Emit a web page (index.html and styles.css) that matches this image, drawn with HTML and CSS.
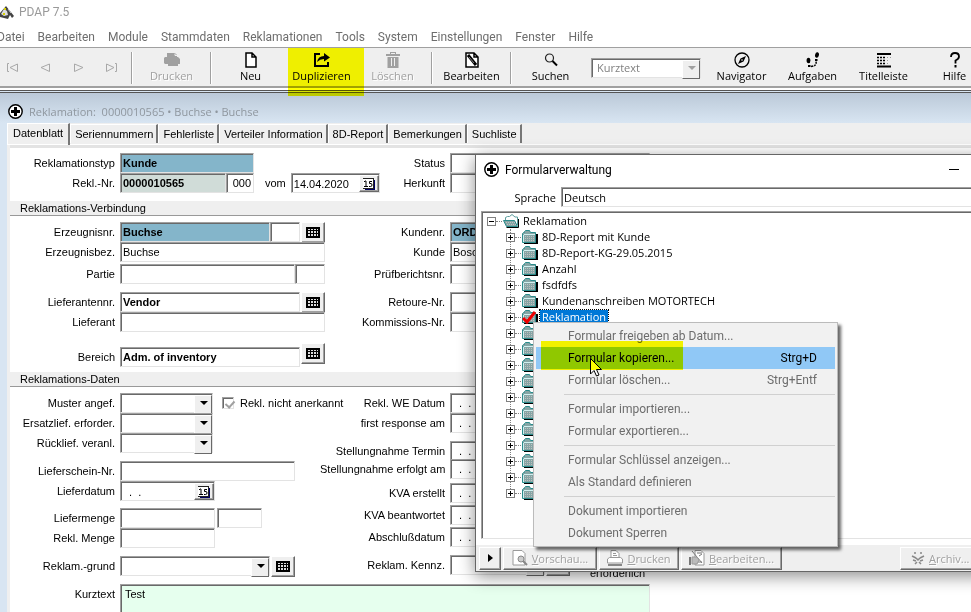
FILE: index.html
```html
<!DOCTYPE html>
<html lang="de">
<head>
  <meta charset="UTF-8">
  <meta name="viewport" content="width=device-width, initial-scale=1.0">
  <title>PDAP 7.5</title>
  <link rel="stylesheet" href="styles.css">
</head>
<body>
  <!-- shared icons -->
  <svg class="defs" width="0" height="0" aria-hidden="true">
    <symbol id="i-plus" viewBox="0 0 15 15">
      <circle cx="7.5" cy="7.5" r="6.7" fill="#fff" stroke="#000" stroke-width="1.4"/>
      <path d="M6 3h3v3h3v3H9v3H6V9H3V6h3z" fill="#000"/>
    </symbol>
    <symbol id="i-grid" viewBox="0 0 14 11">
      <path d="M0 0h14v11H0z" fill="#000"/>
      <path d="M2 2h2v1H2zM5 2h2v1H5zM8 2h2v1H8zM11 2h1v1h-1zM2 4h2v2H2zM5 4h2v2H5zM8 4h2v2H8zM11 4h1v2h-1zM2 7h2v2H2zM5 7h2v2H5zM8 7h2v2H8zM11 7h1v2h-1z" fill="#ddd"/>
    </symbol>
    <symbol id="i-cal" viewBox="0 0 12 12">
      <path d="M2 2h10v10H2z" fill="#000060"/>
      <path d="M0 0h11v11H0z" fill="#222"/>
      <path d="M0 1h10v9H0z" fill="#fff"/>
      <path d="M1 4l1-1h1v5M1 8.500h4M9 3.500H6.500v2H8q1 0 1 1.500T7.500 8.500H6" fill="none" stroke="#000"/>
    </symbol>
    <symbol id="i-folder" viewBox="0 0 16 14">
      <path d="M2 13h13V4" fill="none" stroke="#000" stroke-width="2"/>
      <path d="M.500 12.500v-9l1-1h1v-1l1-1h4l1 2h5v10z" fill="#86a5a5" stroke="#2a8c8c"/>
      <path d="M2 4.500h11M1.500 5v7" fill="none" stroke="#d0f0f0"/>
      <path d="M3 6.500h10M3 8.500h10M3 10.500h10" stroke="#c0c0c0" stroke-dasharray="1 1"/>
    </symbol>
    <symbol id="i-open" viewBox="0 0 16 14">
      <path d="M3.500 13.500h12V5" fill="none" stroke="#000"/>
      <path d="M2.500 7V3.500l2-1h2L9 .500l3 2.500h2.500v8" fill="#fff" stroke="#5a9c9c"/>
      <path d="M.500 6.500h11l3 6h-11z" fill="#86a5a5" stroke="#2a8c8c"/>
      <path d="M3 8.500h9M4 10.500h9" stroke="#c0c0c0" stroke-dasharray="1 1"/>
    </symbol>
  </svg>

  <div class="app">
    <header class="titlebar">
      <svg width="14" height="14" viewBox="0 0 14 14"><path d="M0 8l6-7 8 10-2 2-2-3-2 4-8-2z" fill="#444"/><path d="M4 4l3 2 1 4-4 1-3-2z" fill="#ddd"/><path d="M4 3h2v2H4zM3 8h2v2H3z" fill="#d8d000"/><path d="M8 4l3 4" stroke="#ccc"/></svg>
      <span>PDAP 7.5</span>
    </header>

    <nav class="menubar">
      <a href="#">Datei</a>
      <a href="#">Bearbeiten</a>
      <a href="#">Module</a>
      <a href="#">Stammdaten</a>
      <a href="#">Reklamationen</a>
      <a href="#">Tools</a>
      <a href="#">System</a>
      <a href="#">Einstellungen</a>
      <a href="#">Fenster</a>
      <a href="#">Hilfe</a>
    </nav>

    <div class="toolbar">
      <button class="nav" aria-label="Erster"><svg width="13" height="10" viewBox="0 0 13 10"><path d="M3 .500H1.500v8H3M11.500 1v7.500L4 4.500z"/></svg></button>
      <button class="nav" aria-label="Zurück"><svg width="13" height="10" viewBox="0 0 13 10"><path d="M10.500 1v7.500L2 4.500z"/></svg></button>
      <button class="nav" aria-label="Weiter"><svg width="13" height="10" viewBox="0 0 13 10"><path d="M2.500 1v7.500L11 4.500z"/></svg></button>
      <button class="nav" aria-label="Letzter"><svg width="13" height="10" viewBox="0 0 13 10"><path d="M10 .500h1.500v8H10M1.500 1v7.500L9 4.500z"/></svg></button>
      <span class="sep"></span>
      <button class="tool off"><svg width="16" height="16" viewBox="0 0 16 16"><path d="M3 1h8l2 2v2h1l2 2v5h-2v2H4v-2H1l-1-1V6l1-1h2z" fill="#a0a0a0"/><path d="M11 1.500v2h2" fill="none" stroke="#efefef"/></svg>Drucken</button>
      <span class="sep"></span>
      <button class="tool"><svg width="16" height="16" viewBox="0 0 16 16"><path d="M3 1h6l4 4v10H3zM9 1v4h4" fill="#fff" stroke="#000" stroke-width="1.500"/></svg>Neu</button>
      <button class="tool marked"><svg width="18" height="16" viewBox="0 0 18 16"><path d="M7 2H2v12h13v-4" fill="none" stroke="#000" stroke-width="2"/><path d="M4 10q1-6 7-6V1l6 4.500-6 4V7Q7 7 4 10z"/></svg>Duplizieren</button>
      <button class="tool off"><svg width="16" height="16" viewBox="0 0 16 16"><path d="M1 2h4V0h6v2h4v2H1zM2.500 5h11v11h-11z" fill="#a0a0a0"/><path d="M6.500 6v8M9.500 6v8M6 1.500h4" stroke="#efefef"/></svg>Löschen</button>
      <span class="sep"></span>
      <button class="tool"><svg width="16" height="16" viewBox="0 0 16 16"><path d="M2 1h8l4 4v10H2zM10 1v4h4" fill="#fff" stroke="#000" stroke-width="1.500"/><path d="M4 3l8 10" stroke="#000" stroke-width="3"/><path d="M5 5l5 6" stroke="#fff" stroke-width=".5"/></svg>Bearbeiten</button>
      <span class="sep"></span>
      <button class="tool"><svg width="16" height="16" viewBox="0 0 16 16"><circle cx="6.500" cy="6" r="4" fill="none" stroke="#222" stroke-width="1.200"/><path d="M9.500 9l4.500 4.500" stroke="#000" stroke-width="2"/></svg>Suchen</button>
      <span class="combo off quick"><select aria-label="Suchfeld" disabled><option>Kurztext</option></select></span>
      <button class="tool"><svg width="16" height="16" viewBox="0 0 16 16"><circle cx="8" cy="8" r="7" fill="none" stroke="#000" stroke-width="1.300"/><path d="M12 4L9.500 9.500 4 12l2.500-5.500z"/><circle cx="8" cy="8" r=".8" fill="#fff"/></svg>Navigator</button>
      <button class="tool"><svg width="16" height="16" viewBox="0 0 16 16"><ellipse cx="3.500" cy="8.500" rx="1.900" ry="2.800"/><ellipse cx="12" cy="3" rx="1.900" ry="2.800" transform="rotate(14 12 3)"/><path d="M3 13h2.500v2H3zM10 7h2.500v2H10z"/><path d="M6 14.500q6-.5 5-5" fill="none" stroke="#000" stroke-width="1.500" stroke-dasharray="2 1"/></svg>Aufgaben</button>
      <button class="tool"><svg width="16" height="16" viewBox="0 0 16 16"><path d="M1 2h14M1 14.500h14" stroke="#000" stroke-width="2"/><path d="M1 5.500h9M1 8.500h9M1 11.500h9" stroke="#000" stroke-width="1.500" stroke-dasharray="2 1"/><path d="M11 5.500h4M11 8.500h3M11 11.500h3" stroke="#999" stroke-dasharray="1 2"/></svg>Titelleiste</button>
      <button class="tool"><svg width="16" height="16" viewBox="0 0 16 16"><path d="M4 5q0-4 4-4t4 3.500Q12 7 8.500 8.500v3" fill="none" stroke="#000" stroke-width="1.800"/><path d="M7.500 13h2v2.500h-2z"/></svg>Hilfe</button>
    </div>

    <main class="child">
      <div class="child-title">
        <svg width="15" height="15"><use href="#i-plus"/></svg>
        <span>Reklamation:&nbsp; 0000010565 • Buchse • Buchse</span>
      </div>

      <div class="child-body">
        <div class="tabs">
          <button class="tab active">Datenblatt</button>
          <button class="tab">Seriennummern</button>
          <button class="tab">Fehlerliste</button>
          <button class="tab">Verteiler Information</button>
          <button class="tab">8D-Report</button>
          <button class="tab">Bemerkungen</button>
          <button class="tab">Suchliste</button>
        </div>

        <form class="sheet">
          <div class="cols head">
            <div class="left">
              <div class="row"><label for="typ">Reklamationstyp</label><input id="typ" class="w134 blue" value="Kunde"></div>
              <div class="row"><label for="nr">Rekl.-Nr.</label><input id="nr" class="w106 grey" value="0000010565"><input class="w28 num" aria-label="Index" value="000"><label class="mid" for="vom">vom</label><span class="date w89"><input id="vom" value="14.04.2020"><button type="button" aria-label="Kalender"><svg width="12" height="12"><use href="#i-cal"/></svg></button></span></div>
            </div>
            <div class="right">
              <div class="row"><label for="status">Status</label><input id="status" class="w200"></div>
              <div class="row"><label for="herkunft">Herkunft</label><input id="herkunft" class="w200"></div>
            </div>
          </div>

          <h2>Reklamations-Verbindung</h2>
          <div class="cols">
            <div class="left">
              <div class="row"><label for="erz">Erzeugnisnr.</label><input id="erz" class="w150 blue" value="Buchse"><input class="w30" aria-label="Revision"><button class="pick" type="button" aria-label="Auswahl"><svg width="14" height="11"><use href="#i-grid"/></svg></button></div>
              <div class="row"><label for="bez">Erzeugnisbez.</label><input id="bez" class="w205" value="Buchse"></div>
              <div class="row g2"><label for="partie">Partie</label><input id="partie" class="w175"><input class="w30" aria-label="Partie Zusatz"></div>
              <div class="row g8"><label for="liefnr">Lieferantennr.</label><input id="liefnr" class="w180 bold" value="Vendor"><button class="pick" type="button" aria-label="Auswahl"><svg width="14" height="11"><use href="#i-grid"/></svg></button></div>
              <div class="row"><label for="lief">Lieferant</label><input id="lief" class="w205"></div>
              <div class="row g15"><label for="bereich">Bereich</label><input id="bereich" class="w180 bold" value="Adm. of inventory"><button class="pick up" type="button" aria-label="Auswahl"><svg width="14" height="11"><use href="#i-grid"/></svg></button></div>
            </div>
            <div class="right">
              <div class="row"><label for="kdnr">Kundenr.</label><input id="kdnr" class="w200 blue" value="ORD.1001"></div>
              <div class="row"><label for="kunde">Kunde</label><input id="kunde" class="w200" value="Bosch"></div>
              <div class="row g2"><label for="pruef">Prüfberichtsnr.</label><input id="pruef" class="w200"></div>
              <div class="row g8"><label for="retoure">Retoure-Nr.</label><input id="retoure" class="w200"></div>
              <div class="row"><label for="komm">Kommissions-Nr.</label><input id="komm" class="w200"></div>
            </div>
          </div>

          <h2>Reklamations-Daten</h2>
          <div class="cols">
            <div class="left">
              <div class="row"><label for="muster">Muster angef.</label><span class="combo w93"><select id="muster"><option></option></select></span><span class="check"><input type="checkbox" id="anerk" checked disabled><label for="anerk">Rekl. nicht anerkannt</label></span></div>
              <div class="row"><label for="ersatz">Ersatzlief. erforder.</label><span class="combo w93"><select id="ersatz"><option></option></select></span></div>
              <div class="row"><label for="rueck">Rücklief. veranl.</label><span class="combo w93"><select id="rueck"><option></option></select></span></div>
              <div class="row g8"><label for="schein">Lieferschein-Nr.</label><input id="schein" class="w175"></div>
              <div class="row"><label for="ldatum">Lieferdatum</label><span class="date w95"><input id="ldatum" value="  .  ."><button type="button" aria-label="Kalender"><svg width="12" height="12"><use href="#i-cal"/></svg></button></span></div>
              <div class="row g7"><label for="lmenge">Liefermenge</label><input id="lmenge" class="w95"><input class="w45" aria-label="Einheit"></div>
              <div class="row"><label for="rmenge">Rekl. Menge</label><input id="rmenge" class="w95"></div>
              <div class="row g8"><label for="grund">Reklam.-grund</label><span class="combo w150"><select id="grund"><option></option></select></span><button class="pick" type="button" aria-label="Auswahl"><svg width="14" height="11"><use href="#i-grid"/></svg></button></div>
            </div>
            <div class="right">
              <div class="row"><label for="we">Rekl. WE Datum</label><input id="we" class="w95" value="  .  ."></div>
              <div class="row"><label for="first">first response am</label><input id="first" class="w95" value="  .  ."></div>
              <div class="row g8"><label for="termin">Stellungnahme Termin</label><input id="termin" class="w95" value="  .  ."></div>
              <div class="row tight"><label for="erfolgt">Stellungnahme erfolgt am</label><input id="erfolgt" class="w95" value="  .  ."></div>
              <div class="row g4"><label for="kvae">KVA erstellt</label><input id="kvae" class="w95" value="  .  ."></div>
              <div class="row g2"><label for="kvab">KVA beantwortet</label><input id="kvab" class="w95" value="  .  ."></div>
              <div class="row g2"><label for="abschl">Abschlußdatum</label><input id="abschl" class="w95" value="  .  ."></div>
              <div class="row g8"><label for="kennz">Reklam. Kennz.</label><span class="combo w95"><select id="kennz"><option></option></select></span><button class="pick" type="button" aria-label="Auswahl"><svg width="14" height="11"><use href="#i-grid"/></svg></button><span class="note">erforderlich</span></div>
            </div>
          </div>
          <div class="row area"><label for="kurz">Kurztext</label><textarea id="kurz">Test</textarea></div>
        </form>
      </div>
    </main>

    <section class="dialog" aria-label="Formularverwaltung">
      <div class="dialog-title">
        <svg width="15" height="15"><use href="#i-plus"/></svg>
        <span>Formularverwaltung</span>
        <button class="minimize" aria-label="Minimieren"></button>
      </div>
      <div class="language"><label for="sprache">Sprache</label><input id="sprache" value="Deutsch"></div>
      <div class="tree">
        <div class="node root"><i class="box minus"></i><i class="dots"></i><svg width="16" height="14"><use href="#i-open"/></svg><span>Reklamation</span></div>
        <div class="children" id="nodes"></div>
      </div>
      <footer class="dialog-foot">
        <button class="more" aria-label="Mehr"><svg width="5" height="8" viewBox="0 0 5 8"><path d="M0 0l5 4-5 4z"/></svg></button>
        <button class="w94"><svg width="16" height="16" viewBox="0 0 16 16"><path d="M2 .500h8l3 3V15H1V.500z" fill="#fff" stroke="#999"/><circle cx="9" cy="9" r="3" fill="#ccc" stroke="#888"/><path d="M11 11l4 4" stroke="#888" stroke-width="2"/></svg><span><u>V</u>orschau...</span></button>
        <button class="w80"><svg width="16" height="16" viewBox="0 0 16 16"><path d="M4 8V.500h5l3 3V8M6 3.500h3M6 5.500h4M.500 13V9l2-1.500h11l2 1.500v4z" fill="#fff" stroke="#999"/><path d="M1 14h14v2H1z" fill="#888"/></svg><span><u>D</u>rucken</span></button>
        <button class="w100"><svg width="16" height="16" viewBox="0 0 16 16"><path d="M6 .500h6l3 3V15H6z" fill="#fff" stroke="#999"/><path d="M3 1l10 12M8 3h5M8 12h5M10 6l3-2" stroke="#777"/><path d="M0 7h2v8H0z" fill="#777"/><path d="M3 7h5l2 3-2 4H3z" fill="#bbb" stroke="#999"/></svg><span><u>B</u>earbeiten...</span></button>
        <button class="w90 last"><svg width="14" height="14" viewBox="0 0 14 14"><path d="M1 5l4 2M13 5L9 7M2 9l3 1M12 9l-3 1M4 13l2-2M10 13l-2-2M4 1v2M10 1v2M5 7l2 2 2-2" fill="none" stroke="#888" stroke-width="1.500"/></svg><span><u>A</u>rchiv...</span></button>
      </footer>

      <div class="context">
        <button>Formular freigeben ab Datum...</button>
        <button class="current">Formular kopieren...<kbd>Strg+D</kbd></button>
        <button>Formular löschen...<kbd>Strg+Entf</kbd></button>
        <hr>
        <button>Formular importieren...</button>
        <button>Formular exportieren...</button>
        <hr>
        <button>Formular Schlüssel anzeigen...</button>
        <button>Als Standard definieren</button>
        <hr>
        <button>Dokument importieren</button>
        <button>Dokument Sperren</button>
        <svg class="cursor" width="12" height="19" viewBox="0 0 12 19"><path d="M.500 .500v15.500l3.500-3.500 2.500 5.500 2.500-1-2.500-5.500h5z" fill="#fff" stroke="#000"/></svg>
        <span class="marker"></span>
      </div>
    </section>
  </div>

  <script>
    // entries of the form tree, the rest is behind the menu
    const forms = ["8D-Report mit Kunde", "8D-Report-KG-29.05.2015", "Anzahl", "fsdfdfs",
      "Kundenanschreiben MOTORTECH", "Reklamation"];
    const total = 17;
    const selected = 5;
    const nodes = document.getElementById("nodes");

    for (let i = 0; i < total; i++) {
      const row = document.createElement("div");
      row.className = i === selected ? "node selected" : "node";
      row.innerHTML = '<i class="box"></i><i class="dots"></i><svg width="16" height="14"><use href="#i-folder"/>'
        + (i === selected ? '<path d="M1 8l4 4L13 2" fill="none" stroke="#f00000" stroke-width="3"/>' : '')
        + '</svg>';
      if (forms[i]) {
        const text = document.createElement("span");
        text.textContent = forms[i];
        row.appendChild(text);
      }
      nodes.appendChild(row);
    }
  </script>
</body>
</html>
```
FILE: styles.css
```css
* {
  box-sizing: border-box;
}
body {
  margin: 0;
  background: #fff;
  color: #000;
  font-family: "Liberation Sans", Arial, sans-serif;
  font-size: 11px;
}
button, input, select, textarea {
  font: inherit;
  color: inherit;
  margin: 0;
  border-radius: 0;
}
button {
  padding: 0;
  border: 0;
  background: none;
}
svg {
  display: block;
  flex: none;
}
.defs {
  position: absolute;
}
.app {
  position: relative;
  display: flex;
  flex-direction: column;
  height: 100vh;
  overflow: hidden;
}

/* title and menu */
.toolbar, .child-title, .dialog {
  font-family: "Open Sans", Tahoma, sans-serif;
}
.titlebar, .menubar, .dialog-title, .context {
  font-family: Roboto, "Segoe UI", sans-serif;
  font-size: 12px;
}
.titlebar {
  display: flex;
  align-items: center;
  flex: none;
  gap: 5px;
  height: 24px;
  color: #999;
}
.menubar {
  display: flex;
  align-items: center;
  flex: none;
  gap: 13px;
  height: 23px;
  margin-left: -3px;
  padding-top: 2px;
}
.menubar a {
  color: #6d6d6d;
  text-decoration: none;
}

/* toolbar */
.toolbar {
  display: flex;
  align-items: center;
  flex: none;
  height: 41px;
  margin-left: -4px;
  padding-top: 1px;
  border-top: 1px solid #a0a0a0;
  border-bottom: 2px solid #a0a0a0;
  background: #efefef;
}
.toolbar .nav {
  display: flex;
  justify-content: center;
  flex: none;
  width: 33px;
}
.nav path {
  fill: none;
  stroke: #a8a8a8;
}
.sep {
  flex: none;
  width: 2px;
  height: 32px;
  margin: 0 3px;
  border-left: 1px solid #a0a0a0;
  border-right: 1px solid #fff;
}
.tool {
  position: relative;
  display: flex;
  flex-direction: column;
  align-items: center;
  flex: none;
  width: 71px;
  line-height: 16px;
}
.tool.off {
  color: #a0a0a0;
  text-shadow: 1px 1px 0 #fff;
}
.tool.marked::after {
  content: "";
  position: absolute;
  left: 2px;
  top: -4px;
  width: 76px;
  height: 48px;
  background: #ff0;
  mix-blend-mode: multiply;
}
.quick {
  width: 110px;
  margin: 0 5px;
}

/* child window */
.child {
  display: flex;
  flex-direction: column;
  flex: 1;
  min-height: 0;
  margin-top: 2px;
  border-top: 3px double #555;
  background: #d8e5f2;
}
.child-title {
  display: flex;
  align-items: center;
  gap: 6px;
  flex: none;
  height: 30px;
  padding: 6px 8px 0;
  background: linear-gradient(#bbc9d8, #d8e5f2);
  color: #8f979f;
}
.child-body {
  display: flex;
  flex-direction: column;
  flex: 1;
  margin-left: 7px;
  background: #efefef;
}
.tabs {
  display: flex;
  align-items: center;
  flex: none;
  height: 22px;
  border-bottom: 1px solid #fff;
}
.tab {
  height: 19px;
  padding: 0 3px 0 4px;
  border-top: 1px solid #fff;
  border-left: 1px solid #fff;
  border-right: 2px solid #777;
  white-space: nowrap;
}
.tab.active {
  height: 22px;
  padding: 0 5px 3px;
}
.sheet {
  flex: 1;
  margin-left: 3px;
  padding-top: 5px;
  border-top: 3px solid #e3e3e3;
  background: #fff;
}
.cols {
  display: flex;
  padding: 6px 0 5px;
}
.cols.head {
  padding: 0 0 8px;
}
.left {
  width: 310px;
  flex: none;
}
.right {
  flex: 1;
}
.sheet h2 {
  height: 15px;
  margin: 0;
  padding-left: 10px;
  border-bottom: 1px solid #999;
  background: #efefef;
  font-size: 11px;
  font-weight: normal;
  line-height: 14px;
}
.row {
  display: flex;
  align-items: center;
  height: 20px;
}
.row > label:first-child {
  flex: none;
  width: 105px;
  margin-right: 5px;
  text-align: right;
  white-space: nowrap;
}
.right .row > label:first-child {
  width: 125px;
}
.row .mid {
  margin: 0 5px 0 11px;
}
.g2 { margin-top: 2px; }
.g4 { margin-top: 4px; }
.g7 { margin-top: 7px; }
.g8 { margin-top: 8px; }
.g15 { margin-top: 15px; }
.tight { margin-top: -2px; }

input, .combo, .date, textarea {
  flex: none;
  height: 20px;
  padding: 0 2px;
  border: 1px solid;
  border-color: #a0a0a0 #e3e3e3 #e3e3e3 #a0a0a0;
  box-shadow: inset 1px 1px 0 #696969;
  background: #fff;
  white-space: pre;
}
.bold, .blue, .grey {
  font-weight: bold;
}
.blue { background: #84b5ca; }
.grey { background: #d0dcd8; }
.num { text-align: right; }

.w28 { width: 28px; }
.w30 { width: 30px; }
.w45 { width: 45px; margin-left: 2px; }
.w89 { width: 89px; }
.w93 { width: 93px; }
.w95 { width: 95px; }
.w106 { width: 106px; }
.w134 { width: 134px; }
.w150 { width: 150px; }
.w175 { width: 175px; }
.w180 { width: 180px; }
.w200 { width: 200px; }
.w205 { width: 205px; }

.date {
  display: flex;
  align-items: center;
  padding: 1px 0 0 1px;
}
.date input {
  flex: 1;
  min-width: 0;
  height: 16px;
  border: 0;
  padding: 0 1px;
  box-shadow: none;
}
.date button, .pick, .dialog-foot button {
  display: flex;
  align-items: center;
  justify-content: center;
  flex: none;
  border: 1px solid;
  border-color: #fff #696969 #696969 #fff;
  box-shadow: inset -1px -1px 0 #a0a0a0;
  background: #efefef;
}
.date button {
  width: 20px;
  height: 17px;
}
.pick {
  width: 24px;
  height: 21px;
  margin-left: 1px;
}
.pick.up {
  margin-bottom: 8px;
}
.combo {
  position: relative;
  padding: 0;
}
.combo select {
  width: 100%;
  height: 18px;
  padding: 0 5px;
  border: 0;
  appearance: none;
  background: none;
  opacity: 1;
}
.combo::before {
  content: "";
  position: absolute;
  right: 0;
  top: 1px;
  width: 16px;
  height: 17px;
  border: 1px solid;
  border-color: #fff #696969 #696969 #fff;
  background: #efefef;
}
.combo::after {
  content: "";
  position: absolute;
  right: 4px;
  top: 7px;
  border: 4px solid transparent;
  border-top-color: #000;
  border-bottom: 0;
}
.combo.off {
  color: #808080;
}
.combo.off::after {
  border-top-color: #a0a0a0;
}
.check {
  display: flex;
  align-items: center;
  gap: 6px;
  margin-left: 9px;
  white-space: nowrap;
}
.check input {
  appearance: none;
  position: relative;
  width: 12px;
  height: 12px;
  padding: 0;
}
.check input:checked::after {
  content: "";
  position: absolute;
  left: 4px;
  top: 1px;
  width: 4px;
  height: 7px;
  border: solid #a0a0a0;
  border-width: 0 2px 2px 0;
  transform: rotate(42deg);
}
.note {
  align-self: flex-start;
  margin-left: 20px;
  padding-top: 12px;
  line-height: 12px;
}
.row.area {
  align-items: flex-start;
  height: auto;
  margin-top: 3px;
}
.area label {
  line-height: 20px;
}
.area textarea {
  width: 530px;
  height: 60px;
  padding: 3px 4px;
  resize: none;
  background: #e6ffee;
}

/* form dialog */
.dialog {
  position: absolute;
  left: 475px;
  right: -20px;
  top: 154px;
  border: 1px solid #666;
  background: #fff;
  box-shadow: 0 4px 16px rgba(0, 0, 0, 0.45);
}
.dialog-title {
  display: flex;
  align-items: center;
  gap: 6px;
  height: 32px;
  padding: 0 31px 3px 8px;
}
.minimize {
  width: 10px;
  height: 1px;
  margin-left: auto;
  background: #000;
}
.language {
  display: flex;
  align-items: center;
  gap: 5px;
}
.language label {
  width: 80px;
  text-align: right;
}
.language input {
  flex: 1;
}
.tree {
  height: 328px;
  margin: 4px 0 6px 5px;
  padding: 1px 0 0 5px;
  border: 1px solid;
  border-color: #a0a0a0 #e3e3e3 #e3e3e3 #a0a0a0;
  box-shadow: inset 1px 1px 0 #696969;
}
.node {
  display: flex;
  align-items: center;
  height: 16px;
}
.children {
  position: relative;
  margin-left: 19px;
}
.children::before {
  content: "";
  position: absolute;
  left: 4px;
  top: 0;
  bottom: 8px;
  border-left: 1px dotted #808080;
}
.box {
  position: relative;
  flex: none;
  width: 9px;
  height: 9px;
  border: 1px solid #808080;
  background: linear-gradient(#000, #000) center / 5px 1px no-repeat, linear-gradient(#000, #000) center / 1px 5px no-repeat, #fff;
}
.box.minus {
  background: linear-gradient(#000, #000) center / 5px 1px no-repeat, #fff;
}
.dots {
  width: 6px;
  margin-right: 1px;
  border-top: 1px dotted #808080;
}
.node span {
  margin-left: 2px;
  padding: 0 2px;
  line-height: 14px;
}
.selected span {
  background: #0078d7;
  outline: 1px dotted #000;
  color: #fff;
}
.dialog-foot {
  display: flex;
  align-items: center;
  gap: 2px;
  height: 26px;
  padding-left: 3px;
  background: #efefef;
  color: #a0a0a0;
}
.dialog-foot button {
  gap: 4px;
  height: 23px;
  text-shadow: 1px 1px 0 #fff;
}
.dialog-foot .more { width: 22px; }
.dialog-foot .w94 { width: 94px; }
.dialog-foot .w80 { width: 80px; }
.dialog-foot .w100 { width: 101px; }
.dialog-foot .w90 { width: 90px; }
.dialog-foot .last {
  margin-left: auto;
  justify-content: flex-start;
  padding-left: 10px;
}

/* context menu */
.context {
  position: absolute;
  left: 57px;
  top: 167px;
  width: 305px;
  padding: 2px;
  border: 1px solid #bbb;
  background: #f1f1f1;
  box-shadow: 3px 3px 3px rgba(0, 0, 0, 0.6);
}
.context button {
  display: flex;
  align-items: center;
  justify-content: space-between;
  width: 100%;
  height: 22px;
  padding: 0 18px 0 32px;
  color: #6d6d6d;
}
.context .current {
  background: #90c8f6;
  color: #000;
}
.context kbd {
  font: inherit;
}
.context hr {
  height: 1px;
  margin: 3px 0 3px 28px;
  border: 0;
  background: #d0d0d0;
}
.cursor {
  position: absolute;
  left: 56px;
  top: 35px;
}
.marker {
  position: absolute;
  left: 7px;
  top: 18px;
  width: 142px;
  height: 29px;
  background: #ff0;
  mix-blend-mode: multiply;
}
```
